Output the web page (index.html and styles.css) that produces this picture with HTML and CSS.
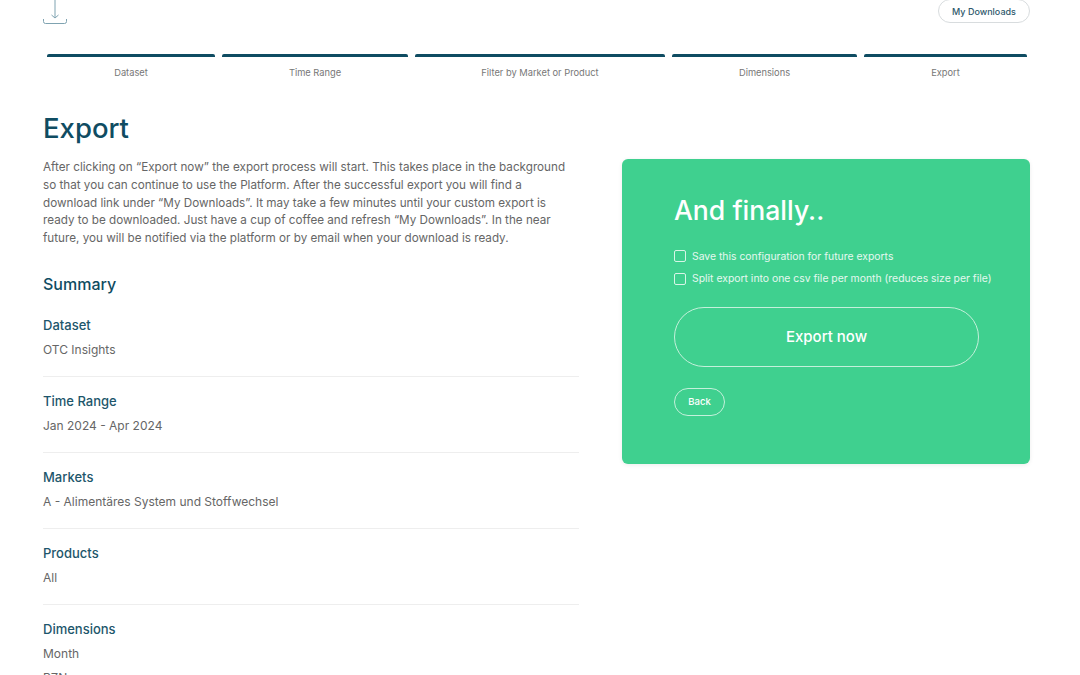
FILE: index.html
```html
<!DOCTYPE html>
<html>
<head>
    <meta charset="utf-8">
    <title>Export</title>
    <link rel="stylesheet" href="styles.css">
</head>
<body>
    <div class="page">
        <div class="topbar">
            <svg class="logo" width="24" height="25" viewBox="0 0 24 25" fill="none" stroke="#7fa3b1" stroke-width="1">
                <path d="M12 0V17.5"/>
                <path d="M8.5 15L12 18L15.5 15"/>
                <path d="M0.5 19V21.5Q0.5 23.5 2.5 23.5H21.5Q23.5 23.5 23.5 21.5V19"/>
            </svg>
            <a class="btn-downloads">My Downloads</a>
        </div>

        <div class="steps">
            <div class="step step-1">Dataset</div>
            <div class="step step-2">Time Range</div>
            <div class="step step-3">Filter by Market or Product</div>
            <div class="step step-4">Dimensions</div>
            <div class="step step-5">Export</div>
        </div>

        <div class="columns">
            <div class="left">
                <h1>Export</h1>
                <p class="intro">After clicking on “Export now” the export process will start. This takes place in the background<br>
                so that you can continue to use the Platform. After the successful export you will find a<br>
                download link under “My Downloads”. It may take a few minutes until your custom export is<br>
                ready to be downloaded. Just have a cup of coffee and refresh “My Downloads”. In the near<br>
                future, you will be notified via the platform or by email when your download is ready.</p>

                <h2>Summary</h2>

                <div class="item">
                    <h3>Dataset</h3>
                    <p>OTC Insights</p>
                </div>
                <div class="item">
                    <h3>Time Range</h3>
                    <p>Jan 2024 - Apr 2024</p>
                </div>
                <div class="item">
                    <h3>Markets</h3>
                    <p>A - Alimentäres System und Stoffwechsel</p>
                </div>
                <div class="item">
                    <h3>Products</h3>
                    <p>All</p>
                </div>
                <div class="item">
                    <h3>Dimensions</h3>
                    <p>Month</p>
                    <p>PZN</p>
                </div>
            </div>

            <div class="card">
                <h2 class="card-title">And finally..</h2>
                <label class="check"><span class="box"></span>Save this configuration for future exports</label>
                <label class="check"><span class="box"></span>Split export into one csv file per month (reduces size per file)</label>
                <a class="btn-export">Export now</a>
                <a class="btn-back">Back</a>
            </div>
        </div>
    </div>
</body>
</html>
```

FILE: styles.css
```css
html, body {
	margin: 0;
	height: 675px;
	overflow: hidden;
	background: #fff;
}
body {
	font-family: "Inter", "Liberation Sans", sans-serif;
	color: #666;
}
.page {
	padding: 0 50px 0 43px;
}
h1, h2, h3, p {
	margin: 0;
	font-weight: 500;
}

.topbar {
	display: flex;
	justify-content: space-between;
	height: 54px;
}
.logo {
	display: block;
}
.btn-downloads {
	box-sizing: border-box;
	width: 92px;
	height: 24px;
	margin-top: -1px;
	border: 1px solid #d8dcde;
	border-radius: 12px;
	font-size: 9px;
	line-height: 23px;
	text-align: center;
	font-weight: 500;
	color: #2f5a6c;
}

.steps {
	display: flex;
	gap: 7px;
	margin-left: 4px;
}
.step {
	box-sizing: border-box;
	height: 40px;
	padding-top: 10px;
	border-top: 3px solid #0f4c62;
	border-radius: 2px 2px 0 0;
	font-size: 9.3px;
	line-height: 12px;
	text-align: center;
	color: #777;
}
.step-1 { width: 168px; }
.step-2 { width: 186px; }
.step-3 { width: 250px; }
.step-4 { width: 185px; }
.step-5 { width: 163px; }

.columns {
	display: flex;
	justify-content: space-between;
	align-items: flex-start;
}
.left {
	width: 536px;
}
h1 {
	margin-top: 16px;
	font-size: 27.5px;
	line-height: 36px;
	color: #0f4c62;
}
.intro {
	margin-top: 13px;
	font-size: 11.7px;
	line-height: 17.75px;
	font-weight: 400;
	white-space: nowrap;
}
.left h2 {
	margin-top: 25px;
	margin-bottom: 6px;
	font-size: 16px;
	line-height: 22px;
	color: #0f4c62;
}
.item {
	padding: 16px 0 21px;
	border-bottom: 1px solid #eee;
	height: 38px;
}
.item:last-child {
	border-bottom: 0;
}
.item h3 {
	font-size: 13px;
	line-height: 16px;
	color: #1d566b;
}
.item p {
	margin-top: 9px;
	font-size: 12px;
	line-height: 16px;
	font-weight: 400;
}
.item p + p {
	margin-top: 8px;
}

.card {
	box-sizing: border-box;
	width: 408px;
	height: 305px;
	margin-top: 65px;
	padding: 32px 40px 0 52px;
	background: #3fd08f;
	border-radius: 6px;
	box-shadow: 0 1px 4px rgba(0,0,0,0.08);
	color: #fff;
}
.card-title {
	margin-bottom: 16px;
	font-size: 26.6px;
	line-height: 38px;
	color: #fff;
}
.check {
	display: flex;
	align-items: center;
	gap: 6px;
	height: 22.5px;
	font-size: 10.4px;
	color: #e6f8ef;
	white-space: nowrap;
}
.box {
	flex-shrink: 0;
	box-sizing: border-box;
	width: 12px;
	height: 12px;
	border: 1px solid #d8f5e7;
	border-radius: 2px;
}
.btn-export {
	display: block;
	box-sizing: border-box;
	width: 305px;
	height: 60px;
	margin-top: 17px;
	border: 1px solid #c4f0db;
	border-radius: 30px;
	font-size: 15px;
	font-weight: 500;
	line-height: 58px;
	text-align: center;
}
.btn-back {
	display: block;
	box-sizing: border-box;
	width: 51px;
	height: 28px;
	margin-top: 21px;
	border: 1px solid #c4f0db;
	border-radius: 14px;
	font-size: 9.5px;
	font-weight: 500;
	line-height: 26px;
	text-align: center;
}
```
